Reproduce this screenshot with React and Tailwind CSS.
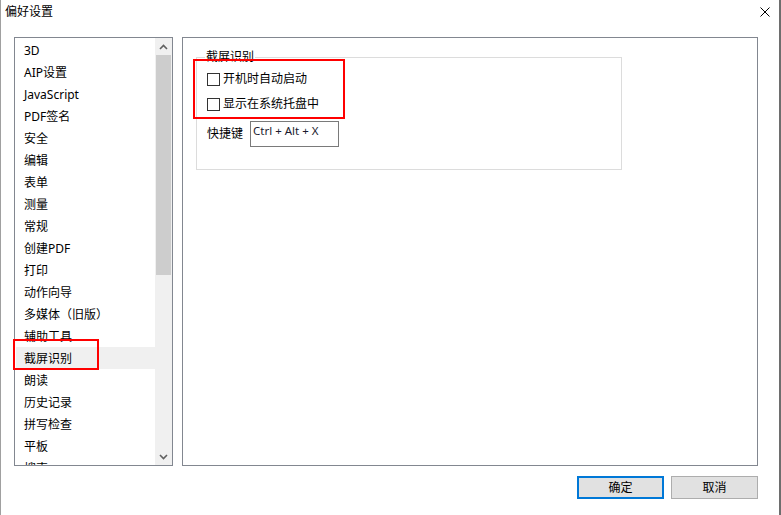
import { useState } from "react";

const items = [
  "3D",
  "AIP设置",
  "JavaScript",
  "PDF签名",
  "安全",
  "编辑",
  "表单",
  "测量",
  "常规",
  "创建PDF",
  "打印",
  "动作向导",
  "多媒体（旧版）",
  "辅助工具",
  "截屏识别",
  "朗读",
  "历史记录",
  "拼写检查",
  "平板",
  "搜索",
];

function Chevron({ down }) {
  return (
    <svg width="9" height="6" viewBox="0 0 9 6">
      <path
        d={down ? "M1 1 L4.5 4.5 L8 1" : "M1 5 L4.5 1.5 L8 5"}
        fill="none"
        stroke="#606060"
        strokeWidth="1.6"
      />
    </svg>
  );
}

function CheckRow({ label }) {
  return (
    <div className="flex items-center h-[20px]">
      <span className="w-[13px] h-[13px] border border-[#333333] bg-white" />
      <span className="ml-[3px]">{label}</span>
    </div>
  );
}

export default function App() {
  const [selected, setSelected] = useState("截屏识别");

  return (
    <div className="relative w-[781px] h-[515px] bg-white border-l border-l-[#a0a0a0] border-r-2 border-r-[#6e6e6e] flex flex-col text-[12px] text-black font-['Noto_Sans','Noto_Sans_CJK_SC',sans-serif] overflow-hidden">
      {/* Title */}
      <div className="h-[24px] flex items-center justify-between pl-[4px] pr-[9px]">
        <span>偏好设置</span>
        <svg width="10" height="10" viewBox="0 0 10 10">
          <path d="M0.5 0.5 L9.5 9.5 M9.5 0.5 L0.5 9.5" stroke="#000" strokeWidth="1" />
        </svg>
      </div>

      {/* Main */}
      <div className="mt-[13px] flex pl-[13px] gap-[9px] h-[429px]">
        {/* List */}
        <div className="w-[159px] h-full border border-[#828790] flex">
          <div className="flex-1 overflow-hidden pt-[1px] pl-[1px]">
            {items.map((it) => (
              <div
                key={it}
                onClick={() => setSelected(it)}
                className={`h-[22px] flex items-center pl-[8px] pt-[2px] whitespace-nowrap ${
                  selected === it ? "bg-[#f0f0f0]" : ""
                }`}
              >
                {it}
              </div>
            ))}
          </div>
          <div className="w-[17px] bg-[#f0f0f0] flex flex-col">
            <div className="h-[17px] flex items-center justify-center">
              <Chevron />
            </div>
            <div className="h-[220px] mx-[1px] bg-[#cdcdcd]" />
            <div className="flex-1" />
            <div className="h-[17px] flex items-center justify-center">
              <Chevron down />
            </div>
          </div>
        </div>

        {/* Panel */}
        <div className="w-[576px] h-full border border-[#828790]">
          <div className="relative ml-[13px] mt-[19px] w-[426px] h-[113px] border border-[#dcdcdc] pl-[10px] pt-[11px]">
            <span className="absolute left-[8px] top-[-9px] bg-white px-[1px] leading-[16px]">截屏识别</span>
            <CheckRow label="开机时自动启动" />
            <div className="mt-[5px]">
              <CheckRow label="显示在系统托盘中" />
            </div>
            <div className="mt-[7px] flex items-center">
              <span>快捷键</span>
              <div className="ml-[7px] w-[89px] h-[26px] border border-[#7a7a7a] pl-[2px] pt-[1px] leading-[16px] text-[11.5px] text-[#1a1a2e]">
                Ctrl + Alt + X
              </div>
            </div>
          </div>
        </div>
      </div>

      {/* Buttons */}
      <div className="mt-[10px] flex justify-end gap-[7px] pr-[21px]">
        <button className="w-[87px] h-[23px] bg-[#e1e1e1] border-2 border-[#0078d7] flex items-center justify-center">
          确定
        </button>
        <button className="w-[87px] h-[23px] bg-[#e1e1e1] border border-[#adadad] flex items-center justify-center">
          取消
        </button>
      </div>

      {/* Red annotation boxes */}
      <div className="absolute left-[12px] top-[339px] w-[86px] h-[31px] border-2 border-[#ff0000] pointer-events-none" />
      <div className="absolute left-[192px] top-[59px] w-[152px] h-[60px] border-2 border-[#ff0000] pointer-events-none" />
    </div>
  );
}
